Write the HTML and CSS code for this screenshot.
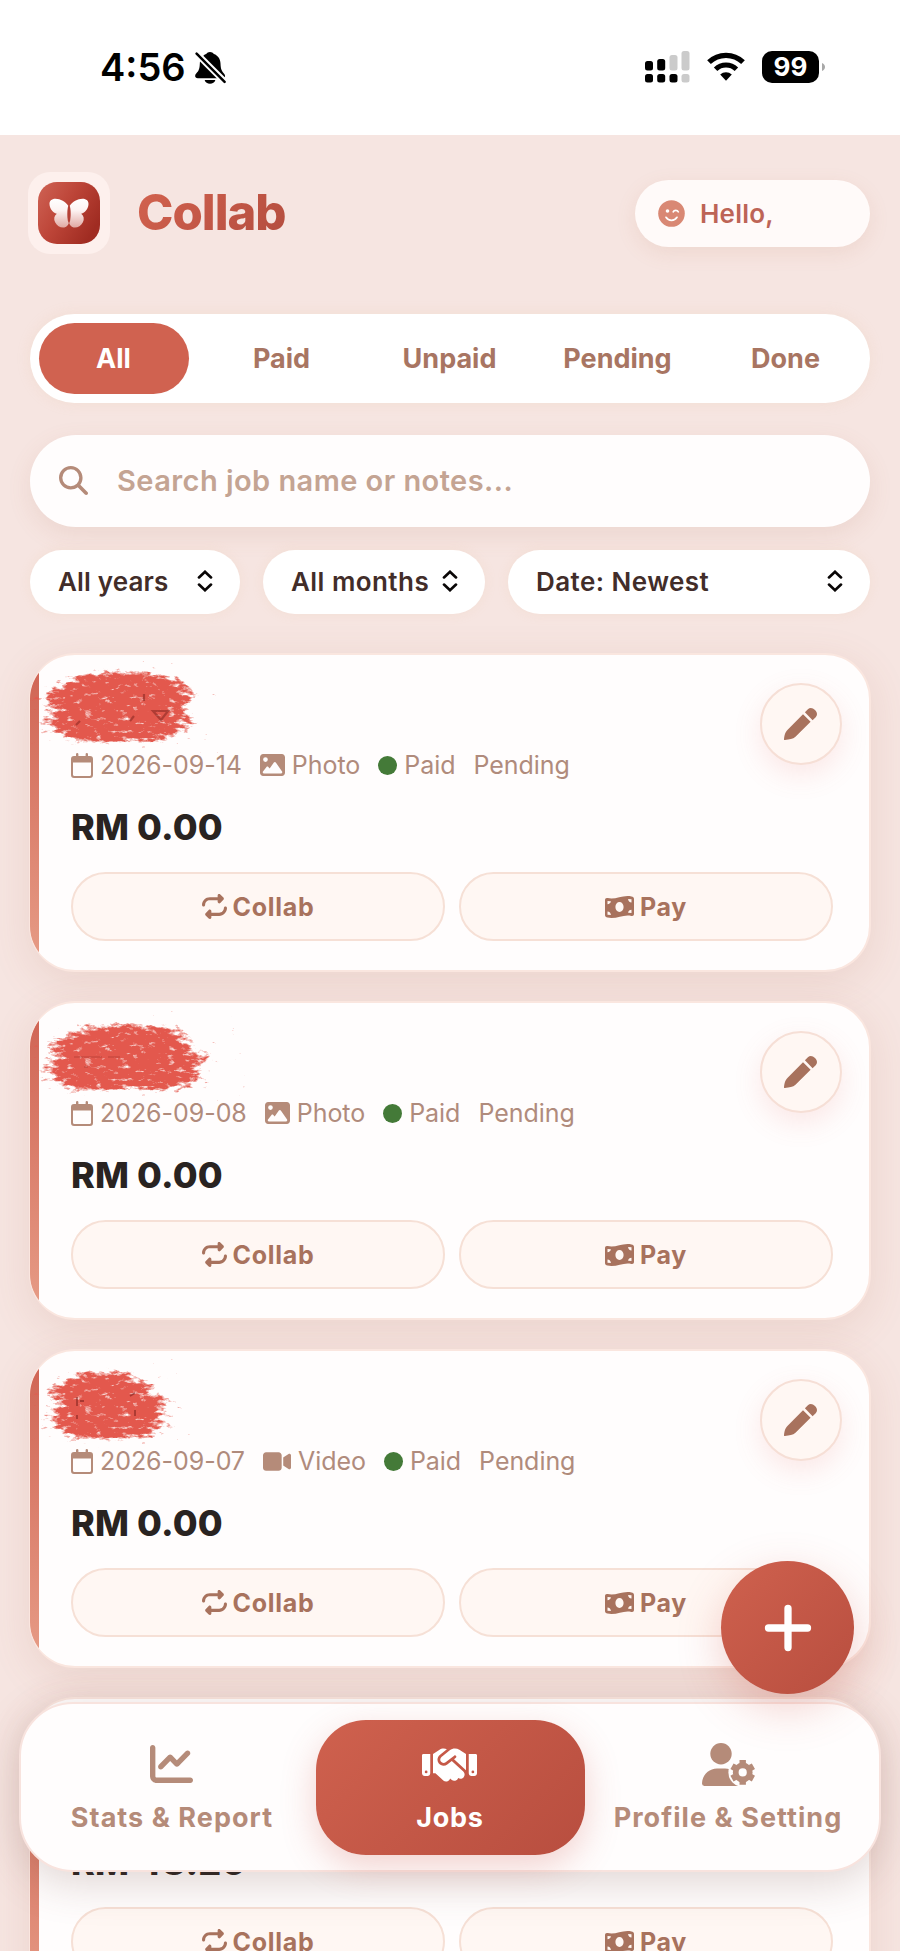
FILE: index.html
```html
<!DOCTYPE html>
<html lang="en">
<head>
<meta charset="utf-8">
<title>Collab</title>
<link rel="stylesheet" href="styles.css">
</head>
<body>
<svg class="defs" width="0" height="0" aria-hidden="true">
  <defs>
    <linearGradient id="tile" x1="0" y1="0" x2="1" y2=".6"><stop offset="0" stop-color="#cf6355"/><stop offset=".5" stop-color="#bd4538"/><stop offset="1" stop-color="#a02c22"/></linearGradient>
    <linearGradient id="wing" x1="0" y1="0" x2="0" y2="1"><stop offset="0" stop-color="#fff"/><stop offset=".4" stop-color="#fdf3f2"/><stop offset="1" stop-color="#e0a8a2"/></linearGradient>
    <filter id="brush" x="-20%" y="-20%" width="140%" height="140%" color-interpolation-filters="sRGB">
      <feGaussianBlur in="SourceAlpha" stdDeviation="9 3.5" result="soft"/>
      <feTurbulence type="fractalNoise" baseFrequency=".11 .24" numOctaves="4" seed="8" result="noise"/>
      <feComposite in="soft" in2="noise" operator="arithmetic" k1="0" k2="2.4" k3="3.4" k4="-2.7" result="mix"/>
      <feColorMatrix in="mix" values="0 0 0 0 .89  0 0 0 0 .345  0 0 0 0 .302  0 0 0 1 0"/>
    </filter>
    <symbol id="calendar" viewBox="0 0 22 25"><path fill-rule="evenodd" d="M5 1.2a1.2 1.2 0 0 1 2.4 0V3h7.200V1.200a1.200 1.200 0 0 1 2.400 0V3h2A3 3 0 0 1 22 6v16a3 3 0 0 1-3 3H3a3 3 0 0 1-3-3V6a3 3 0 0 1 3-3h2zM2 9.500V21.800c0 .7.500 1.200 1.200 1.200h15.600c.7 0 1.200-.5 1.200-1.200V9.500z"/></symbol>
    <symbol id="image" viewBox="0 32 512 448"><path fill-rule="evenodd" d="M0 96C0 60.700 28.700 32 64 32H448c35.300 0 64 28.700 64 64V416c0 35.300-28.700 64-64 64H64c-35.300 0-64-28.700-64-64V96zM323.800 202.500c-4.500-6.600-11.900-10.500-19.800-10.500s-15.400 3.900-19.800 10.500l-87 127.600L170.700 297c-4.600-5.700-11.500-9-18.700-9s-14.200 3.300-18.700 9l-72 92c-5.800 7.200-6.900 17.100-2.900 25.400s12.400 13.600 21.600 13.600H432c8.900 0 17.100-4.900 21.200-12.800s3.600-17.400-1.400-24.700zM112 192a48 48 0 1 0 0-96 48 48 0 1 0 0 96z"/></symbol>
    <symbol id="video" viewBox="0 64 576 384"><path d="M0 128C0 92.700 28.700 64 64 64H320c35.300 0 64 28.700 64 64V384c0 35.300-28.700 64-64 64H64c-35.300 0-64-28.700-64-64V128zM559.100 99.800c10.400 5.600 16.900 16.400 16.900 28.200V384c0 11.800-6.500 22.600-16.900 28.200s-23 5-32.900-1.600l-96-64L416 337.100V174.900l14.200-9.500 96-64c9.800-6.500 22.400-7.200 32.900-1.600z"/></symbol>
    <symbol id="repeat" viewBox="0 0 512 512"><path d="M0 224c0 17.700 14.300 32 32 32s32-14.300 32-32c0-53 43-96 96-96H320v32c0 12.900 7.800 24.600 19.800 29.600s25.700 2.200 34.900-6.900l64-64c12.500-12.500 12.500-32.800 0-45.300l-64-64c-9.200-9.200-22.900-11.900-34.900-6.900S320 19.100 320 32V64H160C71.600 64 0 135.600 0 224zm512 64c0-17.700-14.300-32-32-32s-32 14.300-32 32c0 53-43 96-96 96H192V352c0-12.900-7.800-24.600-19.800-29.600s-25.700-2.200-34.900 6.900l-64 64c-12.500 12.500-12.500 32.800 0 45.300l64 64c9.200 9.200 22.900 11.900 34.900 6.900s19.800-16.600 19.800-29.600V448H352c88.400 0 160-71.600 160-160z"/></symbol>
    <symbol id="money" viewBox="0 0 29 22"><path fill-rule="evenodd" d="M0 4.200C0 2.500 1.100 1.700 2.600 2.100 10.500 4.200 17-1.400 26.500.4 28 .7 29 1.500 29 3v14.800c0 1.700-1.100 2.500-2.600 2.100C18.500 17.800 12 23.400 2.500 21.600 1 21.300 0 20.500 0 19zM14.500 6.100c-2.300 0-4.100 2.100-4.100 4.900s1.800 4.900 4.100 4.900 4.100-2.100 4.100-4.900-1.800-4.900-4.100-4.900zM2.500 5v3.200c1.800 0 3.200-1.200 3.400-2.900zM2.500 15.600v3.200l3.400.3c0-1.900-1.400-3.400-3.400-3.500zM26.500 6.400V3.200L23.100 3c0 1.900 1.500 3.400 3.400 3.400zM26.500 17v-3.200c-1.800 0-3.200 1.200-3.400 2.900z"/></symbol>
    <symbol id="pencil" viewBox="0 0 34 34"><path d="M.9 33c-.7.100-1-.3-.9-1 .6-4.600 1.200-6.900 3.900-9.600L19 7.200l7.600 7.600-15.100 15C8.800 32.300 5.500 32.400.9 33zM20.900 5.300l3-3c2.100-2.100 4.800-1.600 7.100.7 2.300 2.300 2.700 5.200.7 7.200l-3.100 3z"/></symbol>
    <symbol id="updown" viewBox="0 0 16 22"><path d="M2 7.400 8 1.800l6 5.600M2 14.600l6 5.600 6-5.600" fill="none" stroke="#090606" stroke-width="2.700" stroke-linecap="round" stroke-linejoin="miter"/></symbol>
  </defs>
</svg>

<div class="screen">
  <header class="status">
    <div class="status-left">
      <span class="time">4:56</span>
      <svg class="bell" viewBox="0 0 31 33"><path d="M15 1c1.600 0 3.200.7 3.900 2.100 4 1.400 6.400 4.900 6.600 9.500.2 5 .9 7.300 3.200 9.600 2.300 2.400 1.600 5-1.200 5H2.800c-3 0-3.500-2.800-1.400-4.900C3.900 19.700 4.600 17.500 4.800 13 5 8 7.400 4.500 11.200 3.100 12 1.700 13.400 1 15 1zM9.600 29h10.800c-.8 2.500-2.800 3.800-5.400 3.800S10.400 31.500 9.600 29z"/><path d="m1.500 2.500 28.400 28.400" stroke="#fff" stroke-width="6.500"/><path d="m1.600 2.600 28 28.200" stroke="#000" stroke-width="2.500" stroke-linecap="round"/></svg>
    </div>
    <div class="status-right">
      <svg class="signal" viewBox="0 0 45 32"><g fill="#000"><rect y="10" width="8" height="9.500" rx="2.500"/><rect x="12.200" y="8" width="8" height="11.500" rx="2.500"/><rect y="23" width="8" height="8.500" rx="2.500"/><rect x="12.200" y="23" width="8" height="8.500" rx="2.500"/><rect x="24.500" y="23" width="8" height="8.500" rx="2.500"/></g><g fill="#cbcbcb"><rect x="24.500" y="4" width="8" height="15.500" rx="2.500"/><rect x="36.500" width="8" height="19.500" rx="2.500"/><rect x="36.500" y="23" width="8" height="8.500" rx="2.500"/></g></svg>
      <svg class="wifi" viewBox="0 0 38 29"><path d="M2 10.200a24.500 24.500 0 0 1 34 0" fill="none" stroke="#000" stroke-width="5.300"/><path d="M8.600 17.200a15 15 0 0 1 20.800 0" fill="none" stroke="#000" stroke-width="5"/><path d="M13.200 22.600a8.600 8.600 0 0 1 11.600 0L19 28.800z"/></svg>
      <div class="battery"><span>99</span></div>
      <svg class="cap" viewBox="0 0 3 8"><path d="M0 0c4 1.500 4 6.500 0 8z" fill="#a8a8a8"/></svg>
    </div>
  </header>

  <main class="app">
    <div class="brand">
      <div class="logo">
        <svg viewBox="0 0 62 62"><rect width="62" height="62" rx="19" fill="url(#tile)"/><path fill="url(#wing)" d="M30.500 24c-3-4.300-8-7.200-13-7.200-4 0-6.200 2.300-6 5.500.3 4.700 3.300 8.400 7.300 9.500-2.700 2-3.300 5.400-1.700 8.500 2 4 6 5.800 9.300 5.100 2.600-.6 4.200-2.500 4.600-5.400zM31.500 24c3-4.300 8-7.200 13-7.200 4 0 6.200 2.300 6 5.500-.3 4.700-3.300 8.400-7.300 9.500 2.700 2 3.300 5.400 1.700 8.500-2 4-6 5.800-9.300 5.100-2.600-.6-4.200-2.500-4.600-5.400z"/><ellipse cx="31" cy="32" rx="1.700" ry="9" fill="#b54036"/></svg>
      </div>
      <h1>Collab</h1>
      <div class="hello">
        <svg viewBox="0 0 27 27"><circle cx="13.500" cy="13.500" r="13.300" fill="#d98874"/><circle cx="9.500" cy="11" r="1.800" fill="#fff"/><path d="M15.200 11.800c.9-1.900 4.100-1.900 5.100 0M8 17.300c2.600 4 8.400 4 11 0" fill="none" stroke="#fff" stroke-width="1.700" stroke-linecap="round"/></svg>
        <span>Hello,</span>
      </div>
    </div>

    <nav class="tabs">
      <button class="tab active">All</button><button class="tab">Paid</button><button class="tab">Unpaid</button><button class="tab">Pending</button><button class="tab">Done</button>
    </nav>

    <div class="search">
      <svg viewBox="0 0 512 512"><path fill-rule="evenodd" d="M416 208c0 45.900-14.900 88.300-40 122.700L502.600 457.400c12.500 12.500 12.500 32.800 0 45.300s-32.800 12.500-45.300 0L330.700 376c-34.400 25.200-76.800 40-122.700 40C93.100 416 0 322.900 0 208S93.100 0 208 0S416 93.100 416 208zM208 357a149 149 0 1 0 0-298 149 149 0 1 0 0 298z"/></svg>
      <span>Search job name or notes...</span>
    </div>

    <div class="filters">
      <div class="select narrow">All years<svg><use href="#updown"/></svg></div>
      <div class="select">All months<svg><use href="#updown"/></svg></div>
      <div class="select">Date: Newest<svg><use href="#updown"/></svg></div>
    </div>

    <section class="jobs">
      <article class="card">
        <svg class="scribble" viewBox="0 0 180 96"><path d="M32 24 60 13H124l34 12 6 12-10 14 8 12-14 12-20 8H46L26 74 14 62 22 50 10 38z" filter="url(#brush)"/><g fill="none" stroke="#8c2a25" stroke-width="2.200" opacity=".6"><path d="M123 52h15l-7 9zM114 42v-7M46 66l4-4M100 62l4-5"/></g></svg>
        <div class="head">
          <div class="info"><div class="title"></div>
            <div class="meta"><span><svg class="i-cal"><use href="#calendar"/></svg>2026-09-14</span><span><svg class="i-img"><use href="#image"/></svg>Photo</span><span><i class="dot"></i>Paid</span><span>Pending</span></div>
          </div>
          <button class="edit"><svg><use href="#pencil"/></svg></button>
        </div>
        <div class="amount">RM 0.00</div>
        <div class="actions"><button><svg class="i-rep"><use href="#repeat"/></svg>Collab</button><button><svg class="i-pay"><use href="#money"/></svg>Pay</button></div>
      </article>

      <article class="card">
        <svg class="scribble" viewBox="0 0 180 96"><path d="M32 30 60 19 104 17 148 22 160 34 156 40 182 52 162 62 174 72 142 84 96 82 40 84 24 74 14 58 26 48 16 40z" filter="url(#brush)"/><path d="M44 50h28M78 50h12M54 60h4" stroke="#a5352d" opacity=".6"/></svg>
        <div class="head">
          <div class="info"><div class="title"></div>
            <div class="meta"><span><svg class="i-cal"><use href="#calendar"/></svg>2026-09-08</span><span><svg class="i-img"><use href="#image"/></svg>Photo</span><span><i class="dot"></i>Paid</span><span>Pending</span></div>
          </div>
          <button class="edit"><svg><use href="#pencil"/></svg></button>
        </div>
        <div class="amount">RM 0.00</div>
        <div class="actions"><button><svg class="i-rep"><use href="#repeat"/></svg>Collab</button><button><svg class="i-pay"><use href="#money"/></svg>Pay</button></div>
      </article>

      <article class="card">
        <svg class="scribble" viewBox="0 0 180 96"><path d="M34 25 56 17H100l8 10 16 2-4 10 20 6-8 14 2 10-16 15H40L22 70 20 54 30 46 14 38z" filter="url(#brush)"/><path d="M47 42v9M50 46h4M47 60v4M100 41l5-3M105 55v6" stroke="#7f2420" stroke-width="1.800" opacity=".6"/></svg>
        <div class="head">
          <div class="info"><div class="title"></div>
            <div class="meta"><span><svg class="i-cal"><use href="#calendar"/></svg>2026-09-07</span><span><svg class="i-vid"><use href="#video"/></svg>Video</span><span><i class="dot"></i>Paid</span><span>Pending</span></div>
          </div>
          <button class="edit"><svg><use href="#pencil"/></svg></button>
        </div>
        <div class="amount">RM 0.00</div>
        <div class="actions"><button><svg class="i-rep"><use href="#repeat"/></svg>Collab</button><button><svg class="i-pay"><use href="#money"/></svg>Pay</button></div>
      </article>

      <article class="card compact">
        <div class="head"></div>
        <div class="amount">RM 48.20</div>
        <div class="actions"><button><svg class="i-rep"><use href="#repeat"/></svg>Collab</button><button><svg class="i-pay"><use href="#money"/></svg>Pay</button></div>
      </article>
    </section>
  </main>

  <nav class="dock">
    <a class="dock-item">
      <svg class="i-chart" viewBox="0 32 512 448" preserveAspectRatio="none"><path d="M64 64c0-17.700-14.300-32-32-32S0 46.300 0 64V400c0 44.200 35.800 80 80 80H480c17.700 0 32-14.300 32-32s-14.300-32-32-32H80c-8.800 0-16-7.200-16-16V64zm406.600 86.600c12.500-12.500 12.500-32.800 0-45.300s-32.800-12.500-45.300 0L320 210.700l-57.400-57.400c-12.500-12.500-32.800-12.500-45.300 0l-112 112c-12.500 12.500-12.500 32.800 0 45.300s32.800 12.500 45.300 0L240 221.300l57.400 57.400c12.500 12.500 32.800 12.500 45.300 0l128-128z"/></svg>
      <span>Stats &amp; Report</span>
    </a>
    <a class="dock-item active">
      <svg class="i-hand" viewBox="0 0 640 512"><path fill-rule="evenodd" d="M323.400 85.200l-96.800 78.400c-16.100 13-19.200 36.400-7 53.100c12.900 17.800 38 21.300 55.300 7.800l99.300-77.200c7-5.400 17-4.200 22.500 2.800s4.200 17-2.800 22.500l-20.900 16.200L512 316.800V128h-.7l-3.900-2.500L434.800 79c-15.300-9.800-33.200-15-51.400-15c-21.800 0-43 7.500-60 21.200zm22.800 124.400l-51.700 40.200C263 274.300 217.300 268 193.700 235.600c-22.200-30.500-16.600-73.100 12.700-96.800l83.200-67.300c-11.600-4.900-24.100-7.400-36.800-7.400C234 64 215.700 69.600 200 80l-72 48V352h28.200l91.400 83.400c19.600 17.900 49.900 16.500 67.800-3.100c5.500-6.100 9.200-13.200 11.100-20.600l17 15.600c19.500 17.900 49.900 16.600 67.800-2.900c4.500-4.900 7.800-10.600 9.900-16.500c19.400 13 45.800 10.300 62.100-7.500c17.900-19.500 16.600-49.900-2.900-67.800l-134.200-123zM16 128c-8.800 0-16 7.200-16 16V352c0 17.700 14.300 32 32 32H64c17.700 0 32-14.300 32-32V128H16zM48 320a16 16 0 1 1 0 32 16 16 0 1 1 0-32zM544 128V352c0 17.700 14.300 32 32 32h32c17.700 0 32-14.300 32-32V144c0-8.800-7.200-16-16-16H544zm32 208a16 16 0 1 1 32 0 16 16 0 1 1 -32 0z"/></svg>
      <span>Jobs</span>
    </a>
    <a class="dock-item">
      <svg class="i-user" viewBox="0 0 53 43"><mask id="cut"><path fill="#fff" d="M0 0h53v43H0z"/><circle cx="40.700" cy="29.400" r="14.300" fill="#000"/></mask><g mask="url(#cut)"><circle cx="19" cy="10.700" r="10.700"/><path d="M15 25.400h8c8.500 0 14.500 6.500 14.500 17.600H2.400A2.400 2.400 0 0 1 0 40.600c0-8.400 6.700-15.200 15-15.200z"/></g><g fill="none" stroke="#b58b79"><circle cx="40.700" cy="29.400" r="7" stroke-width="5.800"/><path d="M40.700 17v3.500M40.700 38.300v3.500M30 23.200l3 1.700M48.400 33.900l3 1.700M30 35.600l3-1.700M48.400 24.900l3-1.700" stroke-width="6.400" stroke-linecap="butt"/></g></svg>
      <span>Profile &amp; Setting</span>
    </a>
  </nav>

  <button class="fab"><svg viewBox="0 0 48 48"><path d="M24 4.500v39M4.500 24h39" stroke="#fff" stroke-width="7.300" stroke-linecap="round"/></svg></button>
</div>
</body>
</html>
```
FILE: styles.css
```css
* { box-sizing: border-box; }
body { margin: 0; font-family: Inter, "Liberation Sans", sans-serif; }
button { font: inherit; border: 0; padding: 0; margin: 0; background: none; }
svg { display: block; flex: none; }
.defs { position: absolute; }

.screen { position: relative; width: 900px; height: 1951px; overflow: hidden; background: #f6e5e1; }

/* status bar */
.status { height: 135px; background: #fff; display: flex; justify-content: space-between; padding: 51px 75px 0 100px; }
.status-left, .status-right { display: flex; align-items: flex-start; }
.time { font-size: 38px; font-weight: 600; line-height: 33px; letter-spacing: 0; width: 95px; white-space: nowrap; }
.bell { width: 31px; height: 33px; }
.signal { width: 45px; height: 32px; margin-right: 17px; }
.wifi { width: 38px; height: 29px; margin: 1px 17px 0 0; }
.battery { width: 57px; height: 32px; border-radius: 10px; background: #000; color: #fff; font-size: 26px; font-weight: 700; line-height: 32px; text-align: center; }
.cap { width: 3px; height: 8px; margin: 12px 0 0 3px; }

/* header */
.app { padding: 37px 29px 0; }
.brand { display: flex; align-items: center; height: 82px; padding-right: 1px; margin-left: -1px; }
.logo { width: 82px; height: 82px; border-radius: 22px; background: #fdf0ed; padding: 10px; }
.logo svg { width: 62px; height: 62px; }
h1 { margin: 0 0 0 23px; font-size: 49px; font-weight: 800; letter-spacing: -1px; line-height: 60px; padding: 0 4px; color: transparent; background: linear-gradient(135deg, #d4634f, #b24c3e); -webkit-background-clip: text; background-clip: text; }
.hello { margin-left: auto; width: 235px; height: 67px; border-radius: 34px; background: #fffaf9; box-shadow: 0 6px 20px rgba(190, 120, 90, .13); display: flex; align-items: center; padding-left: 23px; gap: 15px; font-size: 26px; font-weight: 600; letter-spacing: .2px; line-height: 34px; color: #bd6456; }
.hello svg { width: 27px; height: 27px; }
.hello span { padding-top: 2px; }

/* tabs, search, filters */
.tabs { margin: 60px 1px 0; height: 89px; border-radius: 45px; background: #fff; padding: 9px; display: grid; grid-template-columns: repeat(5, 150px); gap: 18px; box-shadow: 0 0 14px rgba(235, 190, 150, .18); }
.tab { border-radius: 36px; font-size: 27px; font-weight: 700; color: #a87562; padding: 0 1px 0 0; }
.tab.active { background: #d06250; color: #fff; }
.search { margin: 32px 1px 0; height: 92px; border-radius: 46px; background: #fffdfd; display: flex; align-items: center; padding: 0 0 1px 29px; gap: 29px; box-shadow: 0 8px 24px rgba(170, 110, 80, .12); font-size: 29px; font-weight: 600; letter-spacing: .45px; color: #c4a493; }
.search svg { width: 29px; height: 29px; fill: #b58b79; }
.filters { margin: 23px 1px 0; display: grid; grid-template-columns: 210px 222px 362px; gap: 23px; }
.select { height: 64px; border-radius: 32px; background: #fff; display: flex; align-items: center; justify-content: space-between; padding: 0 27px 2px 28px; font-size: 26px; font-weight: 600; letter-spacing: .45px; color: #422d29; white-space: nowrap; box-shadow: 0 0 12px rgba(235, 190, 150, .16); }
.select.narrow { letter-spacing: .15px; }
.select svg { width: 16px; height: 22px; }

/* job cards */
.jobs { margin-top: 39px; display: grid; gap: 29px; }
.card { position: relative; min-width: 0; height: 319px; border: 2px solid #fae6df; border-left-width: 1px; border-radius: 46px; overflow: hidden; padding: 28px 36px 0 41px; background: linear-gradient(#cf6252, #e79d87) left / 9px 100% no-repeat, #fffdfd; background-origin: padding-box; box-shadow: 0 10px 40px rgba(170, 95, 70, .13); }
.scribble { position: absolute; left: 0; top: 4px; width: 180px; height: 96px; overflow: visible; }
.head { display: flex; justify-content: space-between; height: 97px; }
.title { height: 67px; }
.meta { display: flex; gap: 18px; height: 30px; font-size: 25px; letter-spacing: -.05px; color: #b08b7c; white-space: nowrap; }
.meta span { display: flex; align-items: center; gap: 7px; }
.i-cal { width: 22px; height: 25px; fill: #b58b79; }
.i-img { width: 25px; height: 22px; fill: #b58b79; }
.i-vid { width: 28px; height: 19px; fill: #b58b79; }
.dot { width: 19px; height: 19px; border-radius: 50%; background: #447a38; }
.edit { width: 82px; height: 82px; margin-right: -9px; border: 2px solid #f6dfd6; border-radius: 50%; background: #fff7f3; display: grid; place-items: center; box-shadow: 0 10px 28px rgba(225, 110, 100, .15); }
.edit svg { width: 34px; height: 34px; fill: #a8725d; }
.amount { margin-top: 25px; height: 44px; line-height: 44px; font-size: 36px; font-weight: 800; letter-spacing: .15px; color: #292321; }
.actions { margin-top: 23px; display: grid; grid-template-columns: 1fr 1fr; gap: 14px; }
.actions button { height: 69px; border: 2px solid #f6e0d6; border-radius: 35px; background: #fff7f3; display: flex; align-items: center; justify-content: center; gap: 6px; font-size: 25px; font-weight: 700; letter-spacing: .7px; color: #a8725d; }
.i-rep { width: 25px; height: 25px; fill: #a8725d; }
.i-pay { width: 29px; height: 22px; fill: #a8725d; }
.compact .head { height: 88px; }

/* floating controls */
.fab { position: absolute; left: 721px; top: 1561px; width: 133px; height: 133px; border-radius: 50%; background: linear-gradient(135deg, #cf614e, #b84e3f); display: grid; place-items: center; box-shadow: 0 14px 44px rgba(205, 80, 65, .26); }
.fab svg { width: 48px; height: 48px; }
.dock { position: absolute; left: 19px; right: 19px; top: 1702px; height: 170px; border: 2px solid #f8e3de; border-radius: 54px; background: #fffdfd; display: grid; grid-template-columns: repeat(3, 269px); gap: 9px; padding: 16px 17px; box-shadow: 0 10px 44px rgba(110, 70, 60, .22); }
.dock-item { height: 135px; border-radius: 50px; display: flex; flex-direction: column; align-items: center; justify-content: flex-end; padding: 0 1px 20px 0; font-size: 27px; line-height: 34px; font-weight: 700; letter-spacing: 1.050px; color: #b58b79; fill: #b58b79; white-space: nowrap; }
.dock-item.active { background: linear-gradient(135deg, #cf614e, #b84e3f); color: #fff; fill: #fff; letter-spacing: .7px; box-shadow: 0 12px 34px rgba(205, 85, 70, .25); }
.i-chart { width: 43px; height: 38px; margin: 0 2px 18px 0; }
.i-hand { width: 55px; height: 44px; margin: 0 1px 14px 0; }
.i-user { width: 53px; height: 43px; margin-bottom: 15px; }
```
